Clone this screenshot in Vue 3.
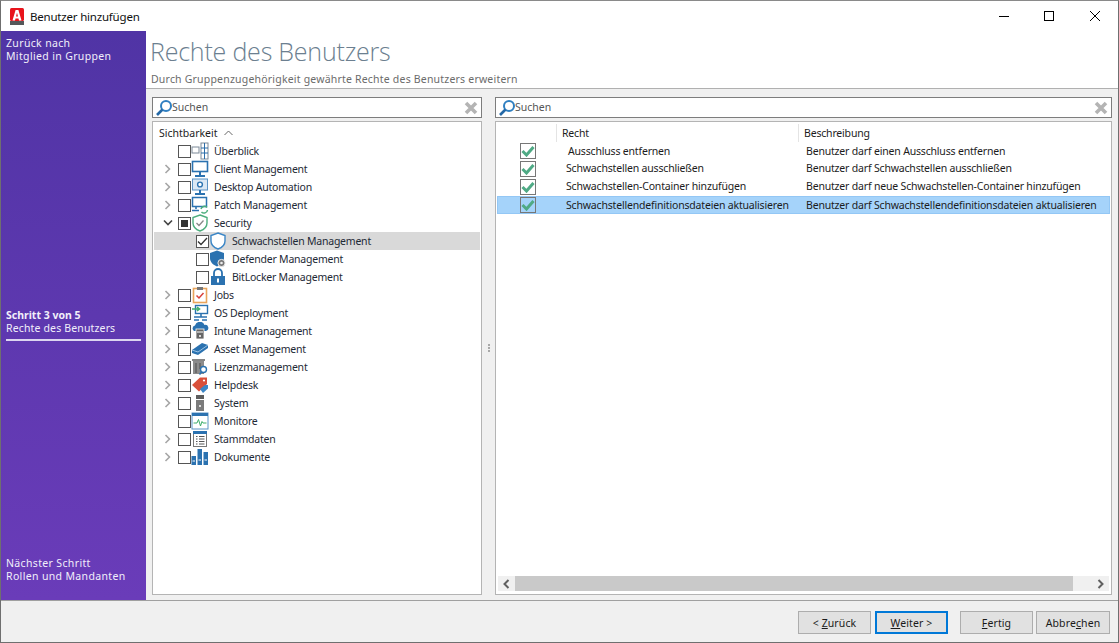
<script setup>
const tree = [
  { id: 'ueberblick', label: 'Überblick', arrow: '', check: '', level: 0 },
  { id: 'client', label: 'Client Management', arrow: 'r', check: '', level: 0 },
  { id: 'desktop', label: 'Desktop Automation', arrow: 'r', check: '', level: 0 },
  { id: 'patch', label: 'Patch Management', arrow: 'r', check: '', level: 0 },
  { id: 'security', label: 'Security', arrow: 'd', check: 'partial', level: 0 },
  { id: 'schwach', label: 'Schwachstellen Management', arrow: '', check: 'on', level: 1, selected: true },
  { id: 'defender', label: 'Defender Management', arrow: '', check: '', level: 1 },
  { id: 'bitlocker', label: 'BitLocker Management', arrow: '', check: '', level: 1 },
  { id: 'jobs', label: 'Jobs', arrow: 'r', check: '', level: 0 },
  { id: 'os', label: 'OS Deployment', arrow: 'r', check: '', level: 0 },
  { id: 'intune', label: 'Intune Management', arrow: 'r', check: '', level: 0 },
  { id: 'asset', label: 'Asset Management', arrow: 'r', check: '', level: 0 },
  { id: 'lizenz', label: 'Lizenzmanagement', arrow: 'r', check: '', level: 0 },
  { id: 'helpdesk', label: 'Helpdesk', arrow: 'r', check: '', level: 0 },
  { id: 'system', label: 'System', arrow: 'r', check: '', level: 0 },
  { id: 'monitore', label: 'Monitore', arrow: '', check: '', level: 0 },
  { id: 'stamm', label: 'Stammdaten', arrow: 'r', check: '', level: 0 },
  { id: 'doku', label: 'Dokumente', arrow: 'r', check: '', level: 0 },
]
const rights = [
  { r: 'Ausschluss entfernen', d: 'Benutzer darf einen Ausschluss entfernen', shift: true },
  { r: 'Schwachstellen ausschließen', d: 'Benutzer darf Schwachstellen ausschließen', up: true },
  { r: 'Schwachstellen-Container hinzufügen', d: 'Benutzer darf neue Schwachstellen-Container hinzufügen', up: true },
  { r: 'Schwachstellendefinitionsdateien aktualisieren', d: 'Benutzer darf Schwachstellendefinitionsdateien aktualisieren', selected: true },
]
</script>

<template>
  <div class="window">
    <header class="titlebar">
      <svg class="logo" width="14" height="17" viewBox="0 0 14 17">
        <rect width="14" height="13" y="0" rx="1.5" fill="#e8141c" />
        <rect width="14" height="4" y="13" fill="#55585a" />
        <path d="M2.5 12.5 L5.6 2 H8.4 L11.5 12.5 H9 L8.5 10.4 H5.5 L5 12.5 Z M6 8.4 H8 L7 4.8 Z" fill="#fff" fill-rule="evenodd" />
      </svg>
      <span class="title">Benutzer hinzufügen</span>
      <div class="controls">
        <svg width="12" height="12" viewBox="0 0 12 12"><path d="M1 6.5H11" stroke="#000" /></svg>
        <svg width="12" height="12" viewBox="0 0 12 12"><rect x="1.5" y="1.5" width="9" height="9" fill="none" stroke="#000" /></svg>
        <svg width="12" height="12" viewBox="0 0 12 12"><path d="M1 1L11 11M11 1L1 11" stroke="#000" /></svg>
      </div>
    </header>

    <div class="main">
      <aside class="side">
        <div class="side-top">Zurück nach<br />Mitglied in Gruppen</div>
        <div class="side-mid">
          <div class="step"><strong>Schritt 3 von 5</strong><br />Rechte des Benutzers</div>
        </div>
        <div class="side-bot">Nächster Schritt<br />Rollen und Mandanten</div>
      </aside>

      <section class="content">
        <div class="head">
          <h1>Rechte des Benutzers</h1>
          <p>Durch Gruppenzugehörigkeit gewährte Rechte des Benutzers erweitern</p>
        </div>
        <div class="body">
          <div class="col left">
            <div class="search">
              <svg class="lens" width="18" height="18" viewBox="0 0 18 18">
                <circle cx="11" cy="7" r="5" fill="none" stroke="#2f7fc1" stroke-width="2" />
                <path d="M7.5 10.5L2 16" stroke="#2468a6" stroke-width="2.6" />
              </svg>
              <span class="stext">Suchen</span>
              <svg class="clear" width="14" height="14" viewBox="0 0 14 14"><path d="M2 2L12 12M12 2L2 12" stroke="#b4b4b4" stroke-width="3.6" /></svg>
            </div>
            <div class="panel tree">
              <div class="tree-head">Sichtbarkeit
                <svg width="9" height="6" viewBox="0 0 9 6"><path d="M.5 5L4.5 1L8.5 5" fill="none" stroke="#666" /></svg>
              </div>
              <div v-for="n in tree" :key="n.id" class="node" :class="{ sel: n.selected, sub: n.level === 1 }">
                <span class="arrow">
                  <svg v-if="n.arrow === 'r'" width="8" height="10" viewBox="0 0 8 10"><path d="M1.5 1L5.5 5L1.5 9" fill="none" stroke="#a6a6a6" stroke-width="1.6" /></svg>
                  <svg v-else-if="n.arrow === 'd'" width="10" height="8" viewBox="0 0 10 8"><path d="M1 1.5L5 5.5L9 1.5" fill="none" stroke="#444" stroke-width="1.6" /></svg>
                </span>
                <span class="box">
                  <i v-if="n.check === 'partial'" class="fill"></i>
                  <svg v-if="n.check === 'on'" width="11" height="11" viewBox="0 0 11 11"><path d="M1 5.5L4 8.5L10 2" fill="none" stroke="#333" stroke-width="1.3" /></svg>
                </span>
                <svg class="ico" width="18" height="18" viewBox="0 0 18 18">
                  <template v-if="n.id === 'ueberblick'">
                    <rect x="1" y="5" width="7" height="6" fill="#fff" stroke="#7c8a98" />
                    <rect x="10" y="1" width="7" height="16" fill="#fff" stroke="#7c8a98" />
                    <path d="M10 6H17M10 11H17M13.5 1V17" stroke="#2b6ca8" />
                  </template>
                  <template v-else-if="n.id === 'client'">
                    <rect x="1.5" y="1.5" width="15" height="10" fill="#fff" stroke="#2b72b0" stroke-width="1.6" />
                    <path d="M9 12V15M4 16H14" stroke="#2b72b0" stroke-width="2" />
                  </template>
                  <template v-else-if="n.id === 'desktop'">
                    <rect x="1.5" y="1" width="15" height="11" fill="#dbe8f4" stroke="#5b93c5" />
                    <circle cx="9" cy="6.5" r="2.4" fill="#fff" stroke="#2b72b0" stroke-width="1.4" />
                    <path d="M9 12V15M4 16H14" stroke="#2b72b0" stroke-width="2" />
                  </template>
                  <template v-else-if="n.id === 'patch'">
                    <rect x="1.5" y="1.5" width="14" height="9" fill="#fff" stroke="#2b72b0" stroke-width="1.5" />
                    <path d="M5 11V13M1 14.5H8" stroke="#2b72b0" stroke-width="1.6" />
                    <path d="M10 13A3.5 3.5 0 0 1 16 11.5M16.5 14A3.5 3.5 0 0 1 10.5 16" fill="none" stroke="#4cae7d" stroke-width="1.5" />
                  </template>
                  <template v-else-if="n.id === 'security'">
                    <path d="M9 1L16 3.5V9C16 13 13 15.6 9 17C5 15.6 2 13 2 9V3.5Z" fill="#fff" stroke="#4cae7d" stroke-width="1.4" />
                    <path d="M5.5 9L8 11.5L12.5 6.5" fill="none" stroke="#888" stroke-width="1.3" />
                  </template>
                  <template v-else-if="n.id === 'schwach'">
                    <path d="M9 1L16 3.5V9C16 13 13 15.6 9 17C5 15.6 2 13 2 9V3.5Z" fill="#fff" stroke="#3b86c6" stroke-width="1.4" />
                  </template>
                  <template v-else-if="n.id === 'defender'">
                    <path d="M8 0.5L15 3V8C15 12 12 15 8 16.5C4 15 1 12 1 8V3Z" fill="#2b72b0" />
                    <circle cx="12.5" cy="13" r="3.6" fill="#777" stroke="#eee" />
                    <circle cx="12.5" cy="13" r="1.3" fill="#eee" />
                  </template>
                  <template v-else-if="n.id === 'bitlocker'">
                    <path d="M5 8V5A4 4 0 0 1 13 5V8" fill="none" stroke="#2b72b0" stroke-width="1.8" />
                    <rect x="2" y="8" width="14" height="9" fill="#2b72b0" />
                    <rect x="8" y="10.5" width="2" height="4" fill="#fff" />
                  </template>
                  <template v-else-if="n.id === 'jobs'">
                    <rect x="2.5" y="2.5" width="13" height="14" fill="#fff" stroke="#e9a55b" stroke-width="1.6" />
                    <rect x="6" y="1" width="6" height="3" fill="#777" />
                    <path d="M5.5 9.5L8 12L12.5 7" fill="none" stroke="#d8403a" stroke-width="1.5" />
                  </template>
                  <template v-else-if="n.id === 'os'">
                    <rect x="4.5" y="1.5" width="12" height="8" fill="#fff" stroke="#2b72b0" stroke-width="1.4" />
                    <path d="M1 5H8M6 3L8.5 5L6 7" fill="none" stroke="#3fae6c" stroke-width="1.6" />
                    <path d="M10 10V13M3 13H16M3 16H8M11 16H16" stroke="#2b72b0" stroke-width="1.6" />
                  </template>
                  <template v-else-if="n.id === 'intune'">
                    <path d="M3 9A3 3 0 0 1 4 3.5A5 5 0 0 1 13.5 3A3 3 0 0 1 15 9Z" fill="#2b72b0" />
                    <rect x="5" y="7" width="8" height="10" fill="#666" stroke="#fff" stroke-width=".8" />
                    <path d="M6 10H12" stroke="#fff" />
                    <circle cx="9" cy="14" r="1" fill="#fff" />
                  </template>
                  <template v-else-if="n.id === 'asset'">
                    <path d="M1 10L11 3L17 5V8L7 15L1 13Z" fill="#2b72b0" />
                    <path d="M1 10L7 12L17 5" fill="none" stroke="#9cc2e2" />
                  </template>
                  <template v-else-if="n.id === 'lizenz'">
                    <path d="M2 3H13V16H2Z" fill="#8c8c8c" />
                    <path d="M1 2H14M5 5V15M9 5V11" stroke="#5f5f5f" stroke-width="1.4" />
                    <circle cx="12.5" cy="11.5" r="3" fill="#fff" stroke="#2b72b0" stroke-width="1.4" />
                    <path d="M10.5 14L8.5 16.5" stroke="#2b72b0" stroke-width="1.6" />
                  </template>
                  <template v-else-if="n.id === 'helpdesk'">
                    <path d="M1 9L9 1.5H16V8L8 15.5Z" fill="#d9503a" />
                    <circle cx="13" cy="4.5" r="1.1" fill="#fff" />
                    <path d="M9 13L14 9H17V12.5L12 17Z" fill="#3b86c6" />
                  </template>
                  <template v-else-if="n.id === 'system'">
                    <rect x="5" y="1" width="8" height="4" fill="#5d5d5d" />
                    <rect x="5" y="6" width="8" height="11" fill="#7b7b7b" />
                    <circle cx="9" cy="12" r="1" fill="#fff" />
                  </template>
                  <template v-else-if="n.id === 'monitore'">
                    <rect x="1" y="1" width="16" height="16" fill="#fff" stroke="#5b93c5" />
                    <rect x="1" y="1" width="16" height="3" fill="#2b72b0" />
                    <path d="M2.5 11H6L7.5 7.5L9.5 14L11 9.5L12 11H15.5" fill="none" stroke="#3fae6c" />
                  </template>
                  <template v-else-if="n.id === 'stamm'">
                    <rect x="2.5" y="1.5" width="13" height="15" fill="#fff" stroke="#777" />
                    <rect x="2" y="1" width="14" height="3" fill="#2b72b0" />
                    <path d="M5 6.5H6.5M8 6.5H13.5M5 9H6.5M8 9H13.5M5 11.5H6.5M8 11.5H13.5M5 14H6.5M8 14H13.5" stroke="#555" />
                  </template>
                  <template v-else-if="n.id === 'doku'">
                    <rect x="0.5" y="8" width="4.5" height="9" fill="#2b72b0" />
                    <rect x="6.5" y="1" width="4.5" height="16" fill="#2b72b0" />
                    <rect x="12.5" y="4" width="4.5" height="13" fill="#2b72b0" />
                    <path d="M1.5 13H4M7.5 12H10M13.5 12H16" stroke="#fff" />
                  </template>
                </svg>
                <span class="lbl">{{ n.label }}</span>
              </div>
            </div>
          </div>

          <div class="split"><i></i><i></i><i></i></div>

          <div class="col right">
            <div class="search">
              <svg class="lens" width="18" height="18" viewBox="0 0 18 18">
                <circle cx="11" cy="7" r="5" fill="none" stroke="#2f7fc1" stroke-width="2" />
                <path d="M7.5 10.5L2 16" stroke="#2468a6" stroke-width="2.6" />
              </svg>
              <span class="stext">Suchen</span>
              <svg class="clear" width="14" height="14" viewBox="0 0 14 14"><path d="M2 2L12 12M12 2L2 12" stroke="#b4b4b4" stroke-width="3.6" /></svg>
            </div>
            <div class="panel table">
              <div class="thead">
                <span class="c0"></span>
                <span class="c1">Recht</span>
                <span class="c2">Beschreibung</span>
              </div>
              <div class="rows">
                <div v-for="r in rights" :key="r.r" class="row" :class="{ sel: r.selected, up: r.up }">
                  <span class="c0">
                    <span class="tick">
                      <svg width="14" height="12" viewBox="0 0 14 12"><path d="M1.5 6L5.5 10L12.5 2" fill="none" stroke="#4faa85" stroke-width="3" /></svg>
                    </span>
                  </span>
                  <span class="c1" :class="{ shift: r.shift }">{{ r.r }}</span>
                  <span class="c2">{{ r.d }}</span>
                </div>
              </div>
              <div class="hscroll">
                <svg width="8" height="10" viewBox="0 0 8 10"><path d="M6 1L2 5L6 9" fill="none" stroke="#606060" stroke-width="2" /></svg>
                <div class="track"><div class="thumb"></div></div>
                <svg width="8" height="10" viewBox="0 0 8 10"><path d="M2 1L6 5L2 9" fill="none" stroke="#606060" stroke-width="2" /></svg>
              </div>
            </div>
          </div>
        </div>
      </section>
    </div>

    <footer class="foot">
      <button class="btn">&lt; <u>Z</u>urück</button>
      <button class="btn primary"><u>W</u>eiter &gt;</button>
      <button class="btn gap"><u>F</u>ertig</button>
      <button class="btn">Abbre<u>c</u>hen</button>
    </footer>
  </div>
</template>

<style>
html, body { margin: 0; height: 100%; overflow: hidden; }
</style>

<style scoped>
.window {
  width: 1119px; height: 643px; box-sizing: border-box;
  border: 1px solid #6f6f6f; border-top-color: #8a8a8a; background: #f0f0f0;
  display: flex; flex-direction: column; overflow: hidden;
  font-family: "Noto Sans", Tahoma, sans-serif; font-size: 10.5px; color: #1c1c1c;
  letter-spacing: -.18px;
}
.titlebar { height: 30px; background: #fff; display: flex; align-items: center; flex: none; }
.logo { margin-left: 9px; margin-right: 6px; }
.title { font-size: 11.5px; color: #111; letter-spacing: -.2px; }
.controls { margin-left: auto; display: flex; gap: 33px; margin-right: 17px; margin-top: -1px; }
.controls svg:last-child { margin-left: 1px; }
.main { flex: 1; display: flex; min-height: 0; border-bottom: 1px solid #a0a0a0; }
.side {
  width: 145px; flex: none; box-sizing: border-box; padding: 6px 5px 17px;
  background: linear-gradient(#5034a5, #6a3cb9); color: #f1effa;
  display: flex; flex-direction: column; line-height: 13px; letter-spacing: .35px;
}
.side-mid { flex: 1; display: flex; align-items: center; padding-top: 30px; }
.step { width: 135px; border-bottom: 2px solid #dcd6f0; padding-bottom: 4px; letter-spacing: .15px; }
.step strong { font-weight: 700; letter-spacing: 0; }
.content { flex: 1; min-width: 0; display: flex; flex-direction: column; }
.head { height: 58px; flex: none; box-sizing: border-box; background: #fff; border-bottom: 1px solid #b0b0b0; padding: 0 4px; }
h1 { margin: 3px 0 0; font-size: 25px; line-height: 34px; font-weight: 300; color: #6c7f90; font-family: "Open Sans", sans-serif; letter-spacing: -.2px; }
.head p { margin: 5px 0 0; line-height: 13px; padding-left: 1px; color: #6b6b6b; letter-spacing: .2px; }
.body { flex: 1; min-height: 0; display: flex; padding: 8px 6px 5px 6px; }
.col { display: flex; flex-direction: column; gap: 3px; min-width: 0; }
.left { width: 330px; flex: none; }
.right { flex: 1; }
.split { width: 13px; flex: none; display: flex; flex-direction: column; align-items: center; justify-content: center; gap: 1px; padding-top: 3px; }
.split i { width: 2px; height: 2px; background: #a8a8a8; }
.search {
  height: 21px; flex: none; box-sizing: border-box; background: #fff; border: 1px solid #7d7d7d;
  display: flex; align-items: center; padding: 0 2px 0 2px; color: #555; letter-spacing: 0;
}
.stext { padding-bottom: 2px; }
.lens { margin-right: -1px; }
.clear { margin-left: auto; margin-right: 1px; }
.panel { flex: 1; min-height: 0; background: #fff; border: 1px solid #b4b4b4; box-sizing: border-box; }
.tree { padding: 2px 1px 1px; }
.tree-head { height: 18px; display: flex; align-items: center; padding-left: 5px; gap: 6px; letter-spacing: 0; }
.node { height: 18px; display: flex; align-items: center; padding-left: 7px; }
.node.sel { background: #d9d9d9; }
.node.sub { padding-left: 25px; }
.arrow { width: 17px; box-sizing: border-box; padding-right: 4px; display: flex; justify-content: center; flex: none; }
.box { width: 11px; height: 11px; box-sizing: content-box; border: 1px solid #555; background: #fff; display: flex; align-items: center; justify-content: center; flex: none; }
.fill { width: 7px; height: 7px; background: #333; }
.ico { margin: 0 5px 0 0; flex: none; }
.lbl { white-space: nowrap; color: #1e2a36; letter-spacing: -.22px; }
.table { display: flex; flex-direction: column; padding: 2px 1px 1px; }
.thead { height: 18px; display: flex; flex: none; align-items: center; }
.thead .c1, .thead .c2 { height: 18px; line-height: 18px; border-left: 1px solid #e4e4e4; box-sizing: border-box; }
.c0 { width: 59px; flex: none; display: flex; justify-content: center; padding-right: 5px; box-sizing: border-box; }
.c1 { width: 242px; flex: none; padding-left: 5px; box-sizing: border-box; white-space: nowrap; }
.c2 { flex: 1; padding-left: 5px; white-space: nowrap; min-width: 0; }
.rows { flex: 1; min-height: 0; }
.row { height: 18px; display: flex; align-items: center; }
.row .c0 { width: 59px; padding-right: 0; padding-left: 3px; }
.row .c1 { padding-left: 10px; width: 240px; }
.row .c1.shift { padding-left: 12px; }
.row .c2 { padding-left: 10px; }
.row.up .c1, .row.up .c2 { margin-top: -2px; }
.row.sel { background: #a5d3fa; box-shadow: inset 0 0 0 1px #93c7f5; }
.tick { width: 14px; height: 14px; border: 1px solid #777; display: flex; align-items: center; justify-content: center; }
.hscroll { height: 15px; margin: 0 1px 2px; flex: none; background: #f0f0f0; display: flex; align-items: center; }
.hscroll svg { width: 17px; flex: none; }
.track { flex: 1; height: 15px; }
.thumb { width: 558px; height: 15px; background: #c9c9c9; }
.foot { height: 41px; flex: none; display: flex; gap: 4px; padding: 10px 8px 0 0; box-sizing: border-box; justify-content: flex-end; align-items: flex-start; }
.btn {
  width: 73px; height: 23px; padding: 0; border: 1px solid #adadad; background: #e1e1e1;
  font: inherit; color: #1a1a1a; letter-spacing: .1px;
}
.btn.primary { border: 2px solid #0078d7; }
.btn.gap { margin-left: 8px; }
.btn:last-child { width: 74px; margin-left: -1px; }
</style>
